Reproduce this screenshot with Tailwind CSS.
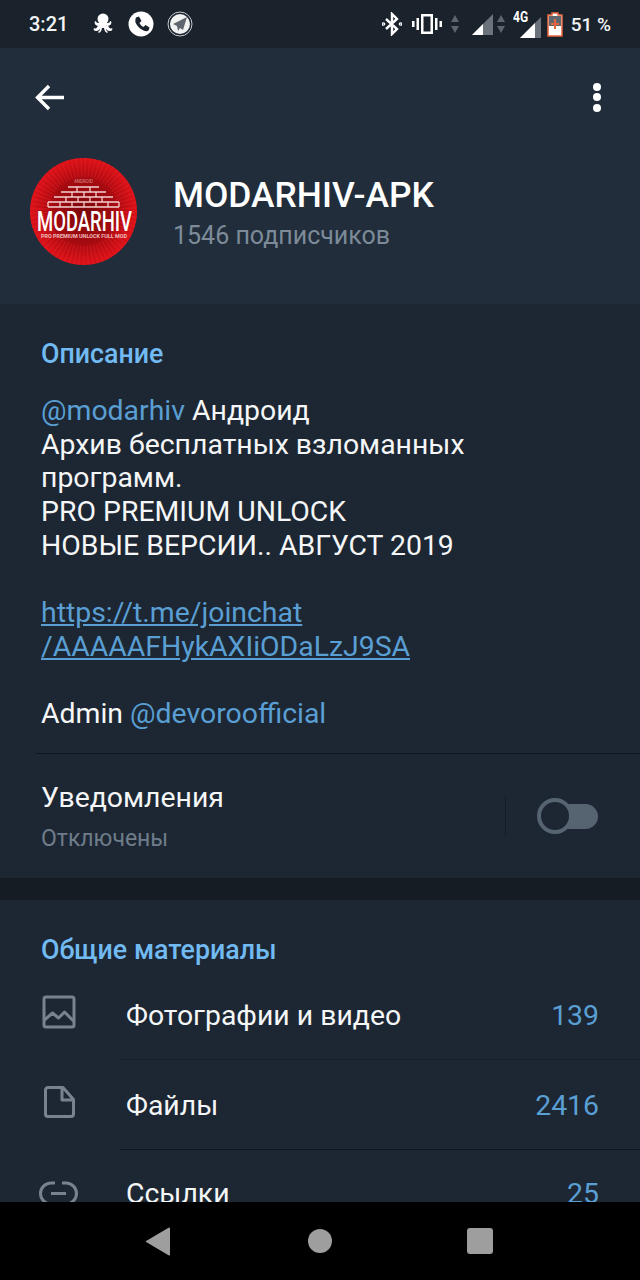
<!DOCTYPE html>
<html><head><meta charset="utf-8"><script src="https://cdn.jsdelivr.net/npm/@tailwindcss/browser@4"></script></head>
<body class="m-0 bg-black">
<div class="w-[640px] h-[1280px] flex flex-col overflow-hidden font-['Roboto',sans-serif] bg-[#1d2733]">
  <div class="h-[48px] shrink-0 bg-[#1a222c] flex items-center pl-[29px] pr-[29px] text-white">
    <span class="text-[20px] font-medium leading-none w-[62px] text-[#f2f4f5]">3:21</span>
    <svg class="w-[24px] h-[24px] ml-0" viewBox="0 0 24 24" fill="#fff"><circle cx="12" cy="7" r="5.5"/><rect x="8.5" y="10" width="7" height="6"/><path d="M10 14c-1 4-3 5-5 5s-3-2-2-3c1 1 3 1 4-3zM14 14c1 4 3 5 5 5s3-2 2-3c-1 1-3 1-4-3zM9 13c-2 1-4 1-5-1s0-3 1-3c0 2 2 2 4 2zM15 13c2 1 4 1 5-1s0-3-1-3c0 2-2 2-4 2zM11 15c0 3-1 5-3 6l-1-1c2-1 2-3 2-5zM13 15c0 3 1 5 3 6l1-1c-2-1-2-3-2-5z"/></svg>
    <svg class="w-[26px] h-[26px] ml-[13px]" viewBox="0 0 26 26"><circle cx="13" cy="13" r="12.5" fill="#fff"/><path d="M8 6.500l3-1 2.500 4.500-2 2c1 2 2 3 4 4l2-2 4 2.500-1 3c-1 1-3 1-5 0-4-2-6-4-8-8-.5-2 0-4 .5-5z" fill="#1a222c"/></svg>
    <svg class="w-[26px] h-[26px] ml-[13px]" viewBox="0 0 26 26"><circle cx="13" cy="13" r="12" fill="none" stroke="#c9cccf" stroke-width="1"/><circle cx="13" cy="13" r="10" fill="#f2f2f2"/><path d="M20 6L6 13l4 2 1 5 2-3 3 2z" fill="#5f666d"/></svg>
    <div class="flex-1"></div>
    <svg class="w-[20px] h-[24px]" viewBox="0 0 20 24" fill="none" stroke="#fff" stroke-width="2.4"><path d="M4 7l11 10-5 5V2l5 5L4 17"/><circle cx="1.5" cy="12" r=".6"/><circle cx="18.5" cy="12" r=".6"/></svg>
    <svg class="w-[30px] h-[24px] ml-[10px]" viewBox="0 0 30 24" fill="#fff"><path d="M9 2h12v20H9zM11.500 4.500v15h7v-15z" fill-rule="evenodd"/><rect x="4.500" y="6" width="2.500" height="12"/><rect x="23" y="6" width="2.500" height="12"/><rect x="0" y="9" width="2.500" height="6"/><rect x="27.500" y="9" width="2.500" height="6"/></svg>
    <svg class="w-[10px] h-[20px] ml-[8px]" viewBox="0 0 10 20" fill="#5d646c"><path d="M5 1l4 7H1zM5 19l-4-7h8z"/></svg>
    <svg class="w-[21px] h-[21px] ml-[12px]" viewBox="0 0 21 21"><path d="M21 0v21H0z" fill="#6b727a"/><path d="M11 10v11H0z" fill="#fff"/></svg>
    <svg class="w-[10px] h-[20px] ml-[3px]" viewBox="0 0 10 20" fill="#5d646c"><path d="M5 1l4 7H1zM5 19l-4-7h8z"/></svg>
    <div class="relative w-[28px] h-[32px] ml-[7px]">
      <span class="absolute left-0 top-[2px] text-[15px] leading-[14px] font-bold text-white scale-x-[.8] origin-left">4G</span>
      <svg class="absolute left-[7px] top-[9px] w-[21px] h-[21px]" viewBox="0 0 21 21"><path d="M21 0v21H0z" fill="#6b727a"/><path d="M15 6v15H0z" fill="#fff"/></svg>
    </div>
    <svg class="w-[16px] h-[25px] ml-[6px]" viewBox="0 0 16 25"><path d="M5 1h6v2h4v21H1V3h4z" fill="#fff" stroke="#e8663f" stroke-width="1.500"/><rect x="2" y="4" width="12" height="10" fill="#5f666d"/><path d="M7 7h2v4h3v2H9v4H7v-4H4v-2h3z" fill="#e8663f"/></svg>
    <span class="text-[19px] font-medium leading-none ml-[8px] text-[#f2f4f5] whitespace-nowrap">51 %</span>
  </div>

  <div class="h-[256px] shrink-0 bg-[#212d3b] flex flex-col">
    <div class="h-[98px] shrink-0 flex items-center justify-between pl-[35px] pr-[39px]">
      <svg class="w-[29px] h-[27px]" viewBox="0 0 29 27" fill="none" stroke="#fff" stroke-width="3.400"><path d="M29 13.500H3M14 2L2.500 13.500 14 25"/></svg>
      <div class="flex flex-col gap-[2.500px]">
        <span class="block w-[8px] h-[8px] rounded-full bg-white"></span>
        <span class="block w-[8px] h-[8px] rounded-full bg-white"></span>
        <span class="block w-[8px] h-[8px] rounded-full bg-white"></span>
      </div>
    </div>
    <div class="flex pl-[30px] pt-[12px]">
      <svg class="w-[107px] h-[107px] shrink-0" viewBox="0 0 107 107">
        <defs><radialGradient id="r"><stop offset="0" stop-color="#7a0609"/><stop offset=".6" stop-color="#a50b10"/><stop offset="1" stop-color="#de1219"/></radialGradient></defs>
        <circle cx="53.500" cy="53.500" r="53.500" fill="url(#r)"/>
        <circle cx="53.500" cy="53.500" r="44" fill="none" stroke="#f0222a" stroke-opacity=".35" stroke-width="19" stroke-dasharray="1.500 2.500"/>
        <text x="53.500" y="25" text-anchor="middle" font-size="4.500" fill="#d98a8a" font-family="Roboto">ANDROID</text>
        <path d="M38 29h31M31 34h45M24 39h59M18 44h71M18 49h71M18 44v5M30 44v5M42 44v5M54 44v5M66 44v5M78 44v5M89 44v5M36 39v5M48 39v5M60 39v5M72 39v5M42 34v5M54 34v5M66 34v5M47 29v5M60 29v5" stroke="#f5cfcf" stroke-width="1.300" fill="none"/>
        <text transform="translate(7 72.500) scale(1 1.450)" font-size="19.500" font-weight="500" fill="#fff" font-family="Roboto" textLength="95" lengthAdjust="spacingAndGlyphs">MODARHIV</text>
        <text x="54" y="80" text-anchor="middle" font-size="5" font-weight="700" fill="#f0bcbc" font-family="Roboto" textLength="86" lengthAdjust="spacingAndGlyphs">PRO PREMIUM UNLOCK FULL MOD</text>
      </svg>
      <div class="ml-[36px] pt-[17px]">
        <div class="text-[35.400px] leading-[40px] font-medium text-white whitespace-nowrap">MODARHIV-APK</div>
        <div class="text-[25px] leading-[30px] mt-[6px] text-[#7d8b99] whitespace-nowrap">1546 подписчиков</div>
      </div>
    </div>
  </div>

  <div class="h-[574px] shrink-0 bg-[#1d2733] flex flex-col">
    <div class="pl-[41px] pt-[35px] text-[26.800px] leading-[30px] font-medium text-[#71baf2]">Описание</div>
    <div class="pl-[41px] pt-[25px] text-[28.400px] leading-[33.700px] text-[#f5f6f7] whitespace-nowrap">
      <div><span class="text-[#5a9fd4]">@modarhiv</span> Андроид</div>
      <div>Архив бесплатных взломанных</div>
      <div>программ.</div>
      <div>PRO PREMIUM UNLOCK</div>
      <div>НОВЫЕ ВЕРСИИ.. АВГУСТ 2019</div>
      <div class="h-[33.700px]"></div>
      <div class="text-[#5a9fd4] underline">https://t.me/joinchat</div>
      <div class="text-[#5a9fd4] underline">/AAAAAFHykAXIiODaLzJ9SA</div>
      <div class="h-[33.700px]"></div>
      <div>Admin <span class="text-[#5a9fd4]">@devoroofficial</span></div>
    </div>
    <div class="ml-[36px] mt-[22px] h-px bg-[#10161d]"></div>
    <div class="flex-1 flex items-center pl-[41px] pr-[42px]">
      <div class="flex-1 pt-[2px]">
        <div class="text-[28.400px] leading-[34px] text-[#f5f6f7]">Уведомления</div>
        <div class="text-[23px] leading-[28px] mt-[10px] text-[#6f7d8b]">Отключены</div>
      </div>
      <div class="w-px h-[40px] bg-[#141b23] mr-[31px]"></div>
      <div class="relative w-[61px] h-[36px]">
        <div class="absolute left-[4px] right-0 top-[6px] h-[25px] rounded-full bg-[#566371]"></div>
        <div class="absolute left-0 top-0 w-[36px] h-[36px] rounded-full bg-[#1d2733] border-[4px] border-[#566371]"></div>
      </div>
    </div>
  </div>

  <div class="h-[22px] shrink-0 bg-[#151c24]"></div>

  <div class="flex-1 min-h-0 overflow-hidden bg-[#1d2733]">
    <div class="pl-[41px] pt-[35px] text-[26.800px] leading-[30px] font-medium text-[#71baf2]">Общие материалы</div>
    <div class="mt-[16px] h-[90px] flex items-center relative">
      <svg class="absolute left-[42px] top-[14px] w-[34px] h-[34px]" viewBox="0 0 34 34" fill="none" stroke="#78838f" stroke-width="3" stroke-linejoin="round"><rect x="2" y="2" width="30" height="30" rx="2"/><path d="M2.500 25l8-7 6 5 6-6 9 9"/></svg>
      <div class="pl-[126px] flex-1 -mt-[20px] text-[28.400px] leading-[34px] text-[#f5f6f7]">Фотографии и видео</div>
      <div class="pr-[41px] -mt-[20px] text-[28.400px] leading-[34px] text-[#5a9fd4]">139</div>
      <div class="absolute left-[120px] right-0 bottom-[11px] h-px bg-[#18212a]"></div>
    </div>
    <div class="h-[90px] flex items-center relative">
      <svg class="absolute left-[44px] top-[15px] w-[31px] h-[32px]" viewBox="0 0 31 32" fill="none" stroke="#78838f" stroke-width="3" stroke-linejoin="round"><path d="M4 1.500h15l10.500 12V28a2.500 2.500 0 0 1-2.500 2.500H4A2.500 2.500 0 0 1 1.500 28V4A2.500 2.500 0 0 1 4 1.500zM18 2v12h11"/></svg>
      <div class="pl-[126px] flex-1 -mt-[20px] text-[28.400px] leading-[34px] text-[#f5f6f7]">Файлы</div>
      <div class="pr-[41px] -mt-[20px] text-[28.400px] leading-[34px] text-[#5a9fd4]">2416</div>
      <div class="absolute left-[120px] right-0 bottom-[11px] h-px bg-[#10161d]"></div>
    </div>
    <div class="h-[60px] flex items-start relative">
      <svg class="absolute left-[39px] top-[19px] w-[39px] h-[28px]" viewBox="0 0 39 28" fill="none" stroke="#78838f" stroke-width="3"><path d="M16 3H12a10.500 10.500 0 0 0 0 21h4M23 3h4a10.500 10.500 0 0 1 0 21h-4M12 13.500h15"/></svg>
      <div class="pl-[126px] flex-1 mt-[16px] text-[28.400px] leading-[34px] text-[#f5f6f7]">Ссылки</div>
      <div class="pr-[41px] mt-[16px] text-[28.400px] leading-[34px] text-[#5a9fd4]">25</div>
    </div>
  </div>

  <div class="relative h-[78px] shrink-0 bg-black">
    <div class="absolute left-0 right-0 top-0 h-[78px] flex items-center">
      <svg class="ml-[146px] w-[25px] h-[29px]" viewBox="0 0 25 29"><path d="M24 1.500v26a1 1 0 0 1-1.500.8L1 15.500a1 1 0 0 1 0-2L22.500.7a1 1 0 0 1 1.500.8z" fill="#9e9e9e"/></svg>
      <div class="ml-[137px] w-[24px] h-[24px] rounded-full bg-[#9e9e9e]"></div>
      <div class="ml-[135px] w-[26px] h-[26px] rounded-[3px] bg-[#9e9e9e]"></div>
    </div>
  </div>
</div>
</body></html>
